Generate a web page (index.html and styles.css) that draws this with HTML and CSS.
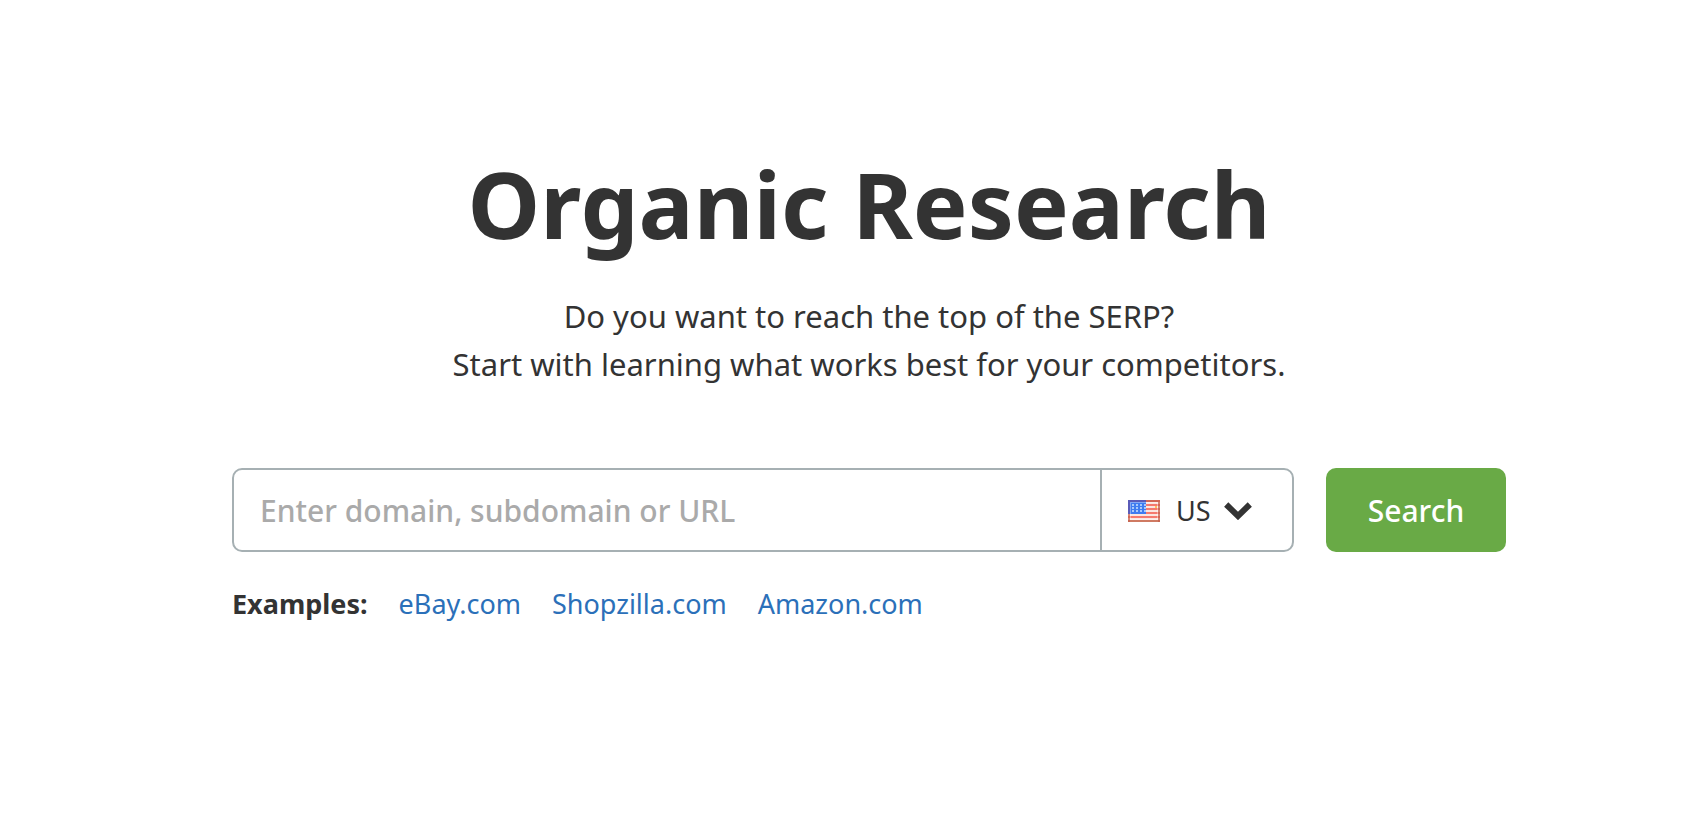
FILE: index.html
```html
<!DOCTYPE html>
<html lang="en">
<head>
    <meta charset="UTF-8">
    <meta name="viewport" content="width=device-width, initial-scale=1.0">
    <title>Organic Research</title>
    <link rel="stylesheet" href="styles.css">
</head>
<body>
    <main class="container">
        <h1>Organic Research</h1>
        <p class="intro">Do you want to reach the top of the SERP?<br>Start with learning what works best for your competitors.</p>

        <form class="search-form">
            <div class="search-box">
                <input class="search-input" type="text" name="domain" placeholder="Enter domain, subdomain or URL" aria-label="Enter domain, subdomain or URL">
                <div class="country">
                    <svg class="flag" viewBox="0 0 32 22" aria-hidden="true">
                        <rect width="32" height="22" fill="#fbe6e0"/>
                        <path d="M18 1h14M18 5h14M18 9h14M18 13h14M0 17h32" stroke="#f67a6e" stroke-width="2"/>
                        <path d="M0 21h32" stroke="#cf7a62" stroke-width="2"/>
                        <rect width="18" height="14" fill="#3f7cf0"/>
                        <path d="M4 5h14M4 8h14M4 11h14" stroke="#a9c8fa" stroke-width="2" stroke-dasharray="2 2"/>
                        <rect x="2.500" y="2.500" width="27" height="17" fill="none" stroke="#fff" opacity=".35"/>
                        <path d="M0 1h18M1 0v14" stroke="#5a5cb8" stroke-width="2"/>
                        <path d="M1 14v8M31 0v22M18 1h14" stroke="#c4604c" stroke-width="2" opacity=".7"/>
                        <path d="M27 6h2v2h-2z" fill="#ffc05c"/>
                    </svg>
                    <select class="country-select" name="country" aria-label="Country">
                        <option>US</option>
                    </select>
                    <svg class="arrow" viewBox="0 0 28 18" aria-hidden="true">
                        <path d="M2.200 2.500L14 14L25.800 2.500" fill="none" stroke="#333" stroke-width="6"/>
                    </svg>
                </div>
            </div>
            <button class="search-button" type="submit">Search</button>
        </form>

        <div class="examples">
            <b>Examples:</b>
            <a href="#">eBay.com</a>
            <a href="#">Shopzilla.com</a>
            <a href="#">Amazon.com</a>
        </div>
    </main>
</body>
</html>
```
FILE: styles.css
```css
* {
    box-sizing: border-box;
}
body {
    font-family: "Noto Sans", "Open Sans", sans-serif;
    margin: 0;
    background-color: #fff;
    color: #333;
}
.container {
    margin: 0 180px 0 232px;
    padding: 142px 0;
}
h1 {
    margin: 0 0 26px;
    font-size: 92px;
    line-height: 124px;
    font-weight: bold;
    text-align: center;
}
.intro {
    margin: 0 0 80px;
    font-size: 31px;
    line-height: 48px;
    text-align: center;
}
.search-form {
    display: flex;
    gap: 32px;
    height: 84px;
}
.search-box {
    flex: 1;
    display: flex;
    border: 2px solid #a6b0b3;
    border-radius: 10px;
    overflow: hidden;
}
.search-input {
    flex: 1;
    min-width: 0;
    padding: 0 26px;
    border: none;
    outline: none;
    background: none;
    color: #333;
    font-family: inherit;
    font-size: 30px;
}
.search-input::placeholder {
    color: #aaa;
    font-weight: 500;
    opacity: 1;
}
.country {
    position: relative;
    display: flex;
    width: 192px;
    border-left: 2px solid #a6b0b3;
}
.country-select {
    width: 100%;
    padding: 0 80px 0 74px;
    appearance: none;
    border: none;
    outline: none;
    background: none;
    color: #333;
    font-family: inherit;
    font-size: 27px;
    cursor: pointer;
}
/* flag and arrow sit over the select */
.flag,
.arrow {
    position: absolute;
    top: 2px;
    bottom: 0;
    margin: auto 0;
    pointer-events: none;
}
.flag {
    left: 26px;
    width: 32px;
    height: 22px;
}
.arrow {
    left: 122px;
    width: 28px;
    height: 18px;
}
.search-button {
    width: 180px;
    border: none;
    border-radius: 10px;
    background-color: #69aa46;
    color: #fff;
    font-family: inherit;
    font-size: 30px;
    font-weight: 500;
    cursor: pointer;
}
.examples {
    display: flex;
    flex-wrap: wrap;
    gap: 31px;
    margin-top: 32px;
    font-size: 27px;
    line-height: 40px;
}
.examples a {
    color: #2b70b9;
    text-decoration: none;
}
```
